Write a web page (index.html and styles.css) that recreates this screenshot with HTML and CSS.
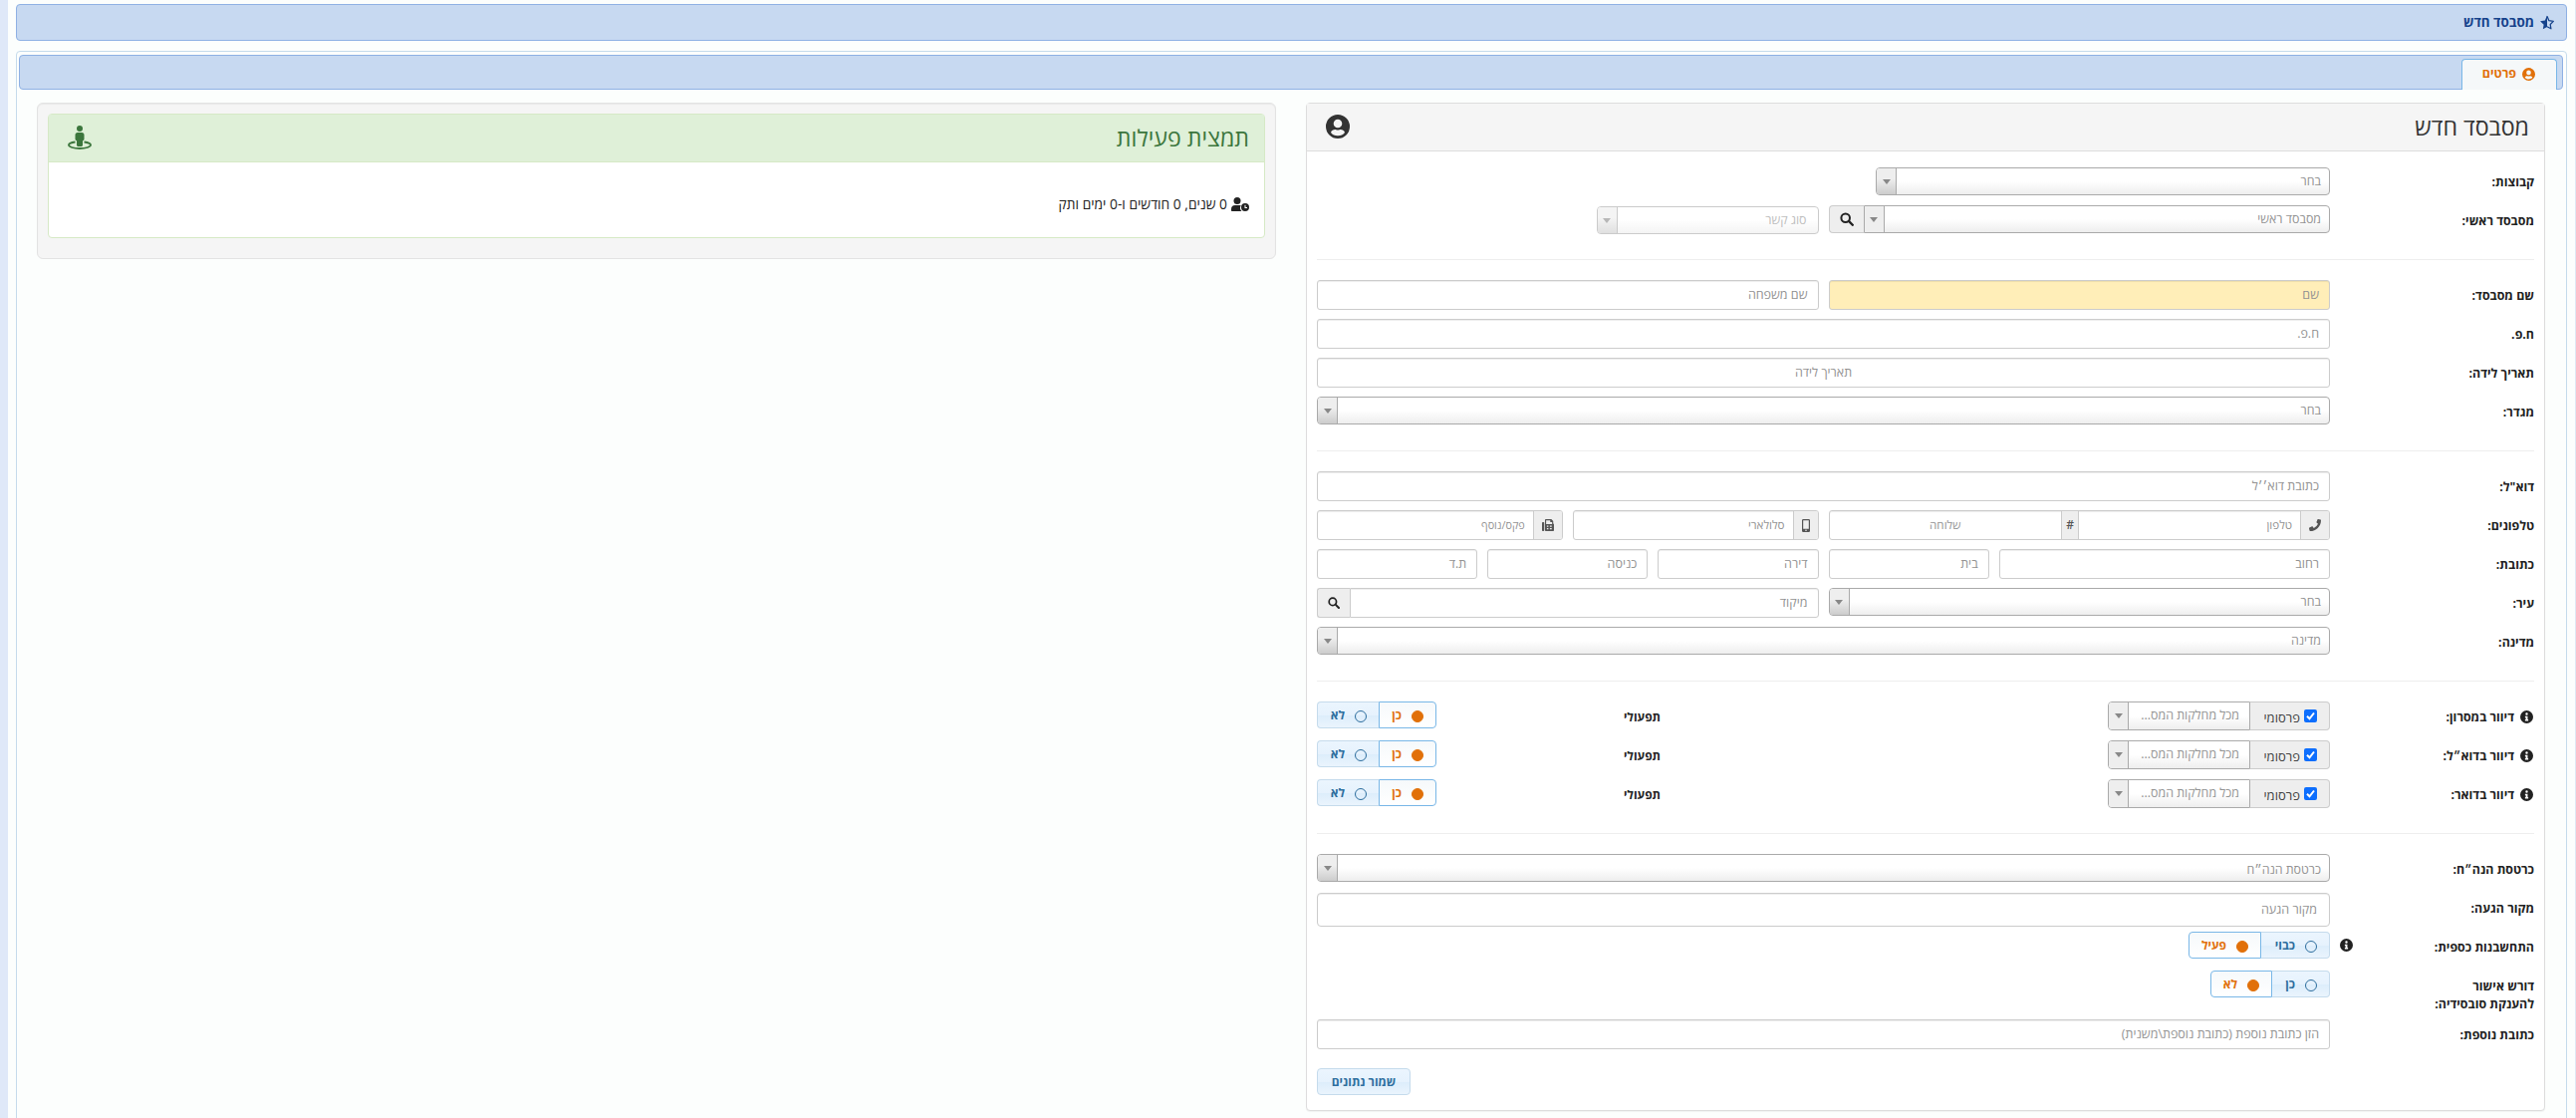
FILE: index.html
```html
<!DOCTYPE html>
<html lang="he" dir="rtl">
<head>
<meta charset="utf-8">
<title>מסבסד חדש</title>
<link rel="stylesheet" href="styles.css">
</head>
<body>
<svg width="0" height="0" class="defs" aria-hidden="true">
  <symbol id="i-user" viewBox="0 0 24 24"><path fill-rule="evenodd" d="M12 0a12 12 0 1 0 0 24a12 12 0 0 0 0-24zM12 4.700a4.300 4.300 0 1 1 0 8.600a4.300 4.300 0 0 1 0-8.600zM12 21.200c-3 0-5.400-1.200-7-3.300c.7-2 2.400-2.900 4.200-2.900c.8 0 1.200.5 2.800.5s2-.5 2.800-.5c1.800 0 3.500.9 4.200 2.900c-1.600 2.100-4 3.300-7 3.300z"/></symbol>
  <symbol id="i-search" viewBox="0 0 16 16"><circle cx="6.500" cy="6.500" r="4.900" fill="none" stroke="currentColor" stroke-width="2.300"/><path d="M10.200 10.200L14.600 14.600" stroke="currentColor" stroke-width="2.700" stroke-linecap="round"/></symbol>
  <symbol id="i-info" viewBox="0 0 16 16"><path fill-rule="evenodd" d="M8 0a8 8 0 1 0 0 16a8 8 0 0 0 0-16zM8 2.800a1.500 1.500 0 1 1 0 3a1.500 1.500 0 0 1 0-3zM6 7h3.200v4H10v1.800H6V11h.9V8.800H6z"/></symbol>
  <symbol id="i-star" viewBox="0 0 18 16"><path d="M9 .2v12.900L4.300 15.700l.9-5.300L1.200 6.500l5.400-.8z"/><path d="M9 1.100l2.100 4.900 5 .8-3.500 3.500.8 4.800L9 12.800" fill="none" stroke="currentColor" stroke-width="1.400" stroke-linejoin="round"/></symbol>
  <symbol id="i-phone" viewBox="0 0 16 16"><path d="M15.500.8L12.300 0c-.4-.1-.7.100-.9.400L9.900 3.900c-.1.300 0 .7.200.9l1.900 1.500a11.400 11.400 0 0 1-5.600 5.600L4.900 10c-.2-.3-.6-.4-.9-.2L.5 11.300c-.4.100-.6.500-.5.900l.7 3.200c.100.400.4.600.8.600C9.500 16 16 9.500 16 1.500c0-.3-.2-.6-.5-.7z"/></symbol>
  <symbol id="i-mobile" viewBox="0 0 10 16"><path fill-rule="evenodd" d="M1.500 0h7A1.500 1.500 0 0 1 10 1.500v13A1.500 1.500 0 0 1 8.500 16h-7A1.500 1.500 0 0 1 0 14.500v-13A1.500 1.500 0 0 1 1.500 0zM1.500 1.500V12h7V1.500zM5 13a1 1 0 1 0 0 2a1 1 0 0 0 0-2z"/></symbol>
  <symbol id="i-fax" viewBox="0 0 16 16"><path fill-rule="evenodd" d="M1 4h1c.6 0 1 .4 1 1v10c0 .6-.4 1-1 1H1c-.6 0-1-.4-1-1V5c0-.6.400-1 1-1zM5 0h7.500L15 2.500V6c.6.200 1 .7 1 1.200V15c0 .6-.4 1-1 1H5c-.6 0-1-.4-1-1V1c0-.6.400-1 1-1zM5.500 1.500V6.500h8V4h-2.500V1.500zM6.500 8.500v1.800h2V8.500zM10.500 8.500v1.800h2.500V8.500zM6.500 12v1.800h2V12zM10.500 12v1.800h2.500V12z"/></symbol>
  <symbol id="i-street" viewBox="0 0 24 24"><circle cx="12" cy="3" r="3"/><path d="M10 7h4a2.500 2.500 0 0 1 2.500 2.500v4c0 .9-.5 1.500-1.500 1.800V19.500c0 .9-.6 1.500-1.500 1.500h-3c-.9 0-1.500-.6-1.500-1.500V15.300c-1-.3-1.500-.9-1.500-1.800v-4A2.500 2.500 0 0 1 10 7z"/><path d="M7.500 16.500C3.500 17 1 18.200 1 19.600C1 21.500 6 23 12 23s11-1.500 11-3.400c0-1.400-2.500-2.600-6.500-3.100" fill="none" stroke="currentColor" stroke-width="1.800"/></symbol>
  <symbol id="i-clock" viewBox="0 0 18 14"><circle cx="6" cy="3.500" r="3.500"/><path d="M4 8h4.500c.500 0 .9.100 1.200.2A4.800 4.800 0 0 0 10.500 14H1c-.6 0-1-.4-1-1v-1a4 4 0 0 1 4-4z"/><path fill-rule="evenodd" d="M14 6a4 4 0 1 0 0 8a4 4 0 0 0 0-8zM13.500 7.800h1v2.100h1.500v1h-2.500z"/></symbol>
</svg>

<div class="page">
  <header class="titlebar"><svg class="ic star"><use href="#i-star"/></svg><span>מסבסד חדש</span></header>

  <main class="tabs">
    <nav class="tabbar"><div class="tab"><svg class="ic tabicon"><use href="#i-user"/></svg><span>פרטים</span></div></nav>
    <div class="columns">
      <section class="panel">
        <div class="phead"><h1>מסבסד חדש</h1><svg class="ic big"><use href="#i-user"/></svg></div>
        <form class="form">
          <div class="group">
            <div class="row"><label>קבוצות:</label><div class="ctl drop"><div class="select narrow"><span>בחר</span><i></i></div></div></div>
            <div class="row"><label>מסבסד ראשי:</label><div class="ctl halves">
              <div class="joined"><div class="select flat"><span>מסבסד ראשי</span><i></i></div><div class="btn"><svg class="ic find"><use href="#i-search"/></svg></div></div>
              <div class="select disabled"><span>סוג קשר</span><i></i></div></div></div>
          </div>
          <hr>
          <div class="group">
            <div class="row"><label>שם מסבסד:</label><div class="ctl halves"><div class="input required">שם</div><div class="input">שם משפחה</div></div></div>
            <div class="row"><label>ח.פ.</label><div class="ctl"><div class="input">ח.פ.</div></div></div>
            <div class="row"><label>תאריך לידה:</label><div class="ctl"><div class="input center">תאריך לידה</div></div></div>
            <div class="row"><label>מגדר:</label><div class="ctl"><div class="select"><span>בחר</span><i></i></div></div></div>
          </div>
          <hr>
          <div class="group">
            <div class="row"><label>דוא"ל:</label><div class="ctl"><div class="input">כתובת דוא׳׳ל</div></div></div>
            <div class="row"><label>טלפונים:</label><div class="ctl quarters">
              <div class="addgroup wide"><b class="a-lg"><svg class="ic"><use href="#i-phone"/></svg></b><span class="tel">טלפון</span><b class="a-xs">#</b><span class="ext">שלוחה</span></div>
              <div class="addgroup"><b class="a-md"><svg class="ic mob"><use href="#i-mobile"/></svg></b><span>סלולארי</span></div>
              <div class="addgroup"><b class="a-lg"><svg class="ic"><use href="#i-fax"/></svg></b><span class="fax">פקס/נוסף</span></div></div></div>
            <div class="row"><label>כתובת:</label><div class="ctl sixths"><div class="input wide">רחוב</div><div class="input">בית</div><div class="input">דירה</div><div class="input">כניסה</div><div class="input">ת.ד</div></div></div>
            <div class="row"><label>עיר:</label><div class="ctl halves"><div class="select"><span>בחר</span><i></i></div><div class="joined zip"><div class="input">מיקוד</div><div class="btn"><svg class="ic find"><use href="#i-search"/></svg></div></div></div></div>
            <div class="row"><label>מדינה:</label><div class="ctl"><div class="select"><span>מדינה</span><i></i></div></div></div>
          </div>
          <hr>
          <div class="group">
            <div class="row"><label><svg class="ic info"><use href="#i-info"/></svg>דיוור במסרון:</label><div class="ctl mail">
              <div class="joined pub"><div class="check"><em><svg viewBox="0 0 13 13"><path d="M3 6.800l2.500 2.500L10 3.500"/></svg></em>פרסומי</div><div class="select flat"><span>מכל מחלקות המס...</span><i></i></div></div>
              <strong>תפעולי</strong><div class="toggle"><div class="on w58">כן</div><div class="w62">לא</div></div></div></div>
            <div class="row"><label><svg class="ic info"><use href="#i-info"/></svg>דיוור בדוא״ל:</label><div class="ctl mail">
              <div class="joined pub"><div class="check"><em><svg viewBox="0 0 13 13"><path d="M3 6.800l2.500 2.500L10 3.500"/></svg></em>פרסומי</div><div class="select flat"><span>מכל מחלקות המס...</span><i></i></div></div>
              <strong>תפעולי</strong><div class="toggle"><div class="on w58">כן</div><div class="w62">לא</div></div></div></div>
            <div class="row"><label><svg class="ic info"><use href="#i-info"/></svg>דיוור בדואר:</label><div class="ctl mail">
              <div class="joined pub"><div class="check"><em><svg viewBox="0 0 13 13"><path d="M3 6.800l2.500 2.500L10 3.500"/></svg></em>פרסומי</div><div class="select flat"><span>מכל מחלקות המס...</span><i></i></div></div>
              <strong>תפעולי</strong><div class="toggle"><div class="on w58">כן</div><div class="w62">לא</div></div></div></div>
          </div>
          <hr>
          <div class="group">
            <div class="row"><label>כרטסת הנה״ח:</label><div class="ctl"><div class="select low"><span>כרטסת הנה״ח</span><i></i></div></div></div>
            <div class="row"><label>מקור הגעה:</label><div class="ctl"><div class="input tall">מקור הגעה</div></div></div>
            <div class="row"><label class="spread">התחשבנות כספית:<svg class="ic info"><use href="#i-info"/></svg></label><div class="ctl"><div class="toggle"><div class="w69">כבוי</div><div class="on w73">פעיל</div></div></div></div>
            <div class="row double"><label>דורש אישור<br>להענקת סובסידיה:</label><div class="ctl"><div class="toggle"><div class="w58">כן</div><div class="on w62">לא</div></div></div></div>
            <div class="row"><label>כתובת נוספת:</label><div class="ctl"><div class="input">הזן כתובת נוספת (כתובת נוספת\משנית)</div></div></div>
          </div>
          <div class="actions"><div class="save">שמור נתונים</div></div>
        </form>
      </section>

      <aside class="well">
        <div class="summary">
          <div class="shead"><h1>תמצית פעילות</h1><svg class="ic big"><use href="#i-street"/></svg></div>
          <div class="sbody"><svg class="ic clock"><use href="#i-clock"/></svg><span>0 שנים, 0 חודשים ו-0 ימים ותק</span></div>
        </div>
      </aside>
    </div>
  </main>
</div>
</body>
</html>
```
FILE: styles.css
```css
* { box-sizing: border-box; }
html, body { margin: 0; height: 1122px; overflow: hidden; }
body {
  background: #fcfefd;
  border-left: 8px solid #dfe8f8;
  border-right: 1px solid #dfe8f4;
  font-family: "Open Sans", "Noto Sans", sans-serif;
  font-size: 12px;
  line-height: 18px;
  color: #222;
}
.defs { position: absolute; }
.ic { display: block; flex: none; width: 13px; height: 13px; fill: currentColor; }
.page { height: 1122px; padding: 4px 8px 0 8px; display: flex; flex-direction: column; gap: 10px; }

.titlebar {
  height: 37px; flex: none; display: flex; align-items: center; gap: 5px; padding: 0 11px 1px 0;
  background: #c7d9f1; border: 1px solid #8fb1e4; border-radius: 4px;
  color: #15428b; font-size: 13.4px; font-weight: 700;
}
.star { width: 16px; height: 15px; }

.tabs { flex: none; height: 1090px; border: 1px solid #c5dbec; border-radius: 4px; padding: 3px 3px 0 2px; }
.tabbar {
  height: 35px; background: #c7d9f1; border: 1px solid #8fb1e4; border-radius: 4px;
  display: flex; align-items: flex-end; padding-right: 5px;
}
.tab {
  height: 31px; width: 96px; margin-bottom: -1px; background: #f5f8f9; border: 1px solid #79b7e7;
  border-bottom: 0; border-radius: 4px 4px 0 0; display: flex; align-items: center; gap: 6px;
  padding: 0 21px 2px 0; color: #e17009; font-weight: 700; font-size: 12.5px;
}
.columns { display: grid; grid-template-columns: 1244px 1244px; gap: 30px; justify-content: start; padding: 13px 18px 0 0; align-items: start; }

.panel { height: 1012px; background: #fff; border: 1px solid #ddd; border-radius: 4px; box-shadow: 0 1px 1px rgba(0,0,0,.05); }
h1 { margin: 0; font-size: 23.2px; font-weight: 500; line-height: 26px; }
.phead {
  height: 48px; display: flex; align-items: center; justify-content: space-between;
  background: #f5f5f5; border-bottom: 1px solid #ddd; padding: 0 15px 2px 19px; color: #333;
}
.big { width: 24px; height: 24px; }

.form { padding: 15px 10px 0; display: flex; flex-direction: column; }
.form hr { width: 100%; height: 1px; border: 0; background: #eee; margin: 15px 0 20px; }
.row { display: grid; grid-template-columns: 195px 1017px; gap: 10px; height: 39px; align-items: start; }
.row label { font-weight: 700; font-size: 12.4px; padding-top: 7px; display: flex; line-height: 18px; gap: 6px; }
.row .info { margin: 2px 1px 0 0; }
.row label.spread { justify-content: space-between; }
.row label.spread .info { margin: 0; }
.ctl { display: flex; align-items: flex-start; }
.drop { padding-top: 1px; }
.halves { display: grid; grid-template-columns: 1fr 1fr; gap: 10px; }
.quarters { display: grid; grid-template-columns: repeat(4, 1fr); gap: 10px; }
.sixths { display: grid; grid-template-columns: repeat(6, 1fr); gap: 10px; }
.wide { grid-column: span 2; }

.input {
  flex: 1; height: 30px; border: 1px solid #ccc; border-radius: 3px; background: #fff; color: #939393; font-size: 12.500px; font-weight: 500;
  box-shadow: inset 0 1px 1px rgba(0,0,0,.075); padding: 5px 10px; line-height: 18px;
}
.input.required { background: #ffeeb8; }
.input.center { text-align: center; }
.input.tall { height: 34px; padding: 7px 12px; border-radius: 4px; }

.select {
  flex: 1; height: 28px; display: flex; border: 1px solid #aaa; border-radius: 4px; overflow: hidden;
  background: linear-gradient(#fff 50%, #eee); color: #939393; font-size: 12.400px; font-weight: 500;
}
.select span { flex: 1; padding: 4px 8px 0; line-height: 18px; white-space: nowrap; }
.select i {
  width: 20px; border-right: 1px solid #aaa; display: flex; align-items: center; justify-content: center;
  background: linear-gradient(#eee 40%, #ccc);
}
.select i::before { content: ""; border: 4px solid transparent; border-top: 5px solid #888; border-bottom: 0; }
.select.narrow { flex: none; width: 456px; }
.select.low span { padding-top: 6px; }
.select.disabled { opacity: .6; width: 223px; margin-top: 1px; }
.select.disabled span { padding-right: 11px; }

.joined { display: flex; flex: 1; }
.joined .flat { border-radius: 0 4px 4px 0; }
.joined .flat i { background: #eee; width: 20px; }
.joined .btn {
  width: 35px; height: 28px; display: flex; align-items: center; justify-content: center;
  background: #eee; border: 1px solid #ccc; border-right: 0; border-radius: 4px 0 0 4px;
}
.find { width: 14px; height: 14px; }
.zip .input { border-radius: 0 3px 3px 0; }
.zip .btn { width: 33px; height: 30px; border-radius: 3px 0 0 3px; }
.zip .find { width: 12px; height: 12px; }

.addgroup { height: 30px; display: flex; border: 1px solid #ccc; border-radius: 3px; overflow: hidden; box-shadow: inset 0 1px 1px rgba(0,0,0,.075); color: #939393; font-size: 11.600px; font-weight: 500; }
.addgroup b { display: flex; align-items: center; justify-content: center; background: #eee; color: #555; border-left: 1px solid #ccc; font-weight: 600; font-size: 12px; }
.addgroup span { flex: 1; padding: 5px 8px; }
.addgroup .tel { flex: none; width: 222px; }
.addgroup .ext { text-align: center; }
.addgroup .fax { font-size: 10.800px; }
.a-lg { width: 29px; } .a-md { width: 25px; } .a-xs { width: 18px; border-right: 1px solid #ccc; }
.addgroup .ic { width: 12px; height: 12px; }
.addgroup .mob { width: 8px; height: 13px; }

.mail .pub { flex: none; width: 223px; }
.check {
  width: 80px; height: 29px; display: flex; align-items: center; gap: 4px; padding: 2px 12px 0 0;
  background: #eee; border: 1px solid #ccc; border-left: 0; border-radius: 0 4px 4px 0; color: #444; font-size: 13px;
}
.check em { width: 13px; height: 13px; border-radius: 2px; background: #0d6efd; margin-top: -3px; }
.check svg { display: block; width: 13px; height: 13px; fill: none; stroke: #fff; stroke-width: 2; }
.mail .pub .flat { height: 29px; border-radius: 4px 0 0 4px; }
.mail .pub .flat span { padding: 4px 10px 0 0; }
.mail .pub .flat i { flex: none; }
.mail strong { margin-right: 449px; padding-top: 7px; }
.mail .toggle { margin-right: auto; }

.toggle { display: flex; height: 27px; }
.toggle div, .save {
  display: flex; align-items: center; height: 27px; font-weight: 700; color: #2e6e9e; border: 1px solid #c5dbec;
  background: linear-gradient(#ebf5fe 0, #e6f2fd 50%, #dcedfb 51%, #eaf4fd 100%);
}
.toggle div { gap: 10px; padding: 0 12px 0 0; }
.toggle div::before { content: ""; width: 10px; height: 10px; border: 1px solid #2e6e9e; border-radius: 50%; margin-top: 2px; }
.toggle div:first-child { border-radius: 0 4px 4px 0; border-left: 0; }
.toggle div:last-child { border-radius: 4px 0 0 4px; }
.toggle .on.on { background: linear-gradient(#f6f9fb, #fff); border: 1px solid #79b7e7; color: #e17009; }
.toggle .on.on + div { border-right: 0; }
.toggle .on::before { background: #e17009; border-color: #e17009; }
.w58 { width: 58px; } .w62 { width: 62px; } .w69 { width: 69px; } .w73 { width: 73px; }

.row.double { height: 49px; }
.actions { display: flex; justify-content: flex-end; padding-top: 10px; }
.save { width: 94px; justify-content: center; border-radius: 4px; }

.well { height: 157px; padding: 10px; background: #f5f5f5; border: 1px solid #e3e3e3; border-radius: 6px; box-shadow: inset 0 1px 1px rgba(0,0,0,.05); }
.summary { height: 125px; background: #fff; border: 1px solid #d6e9c6; border-radius: 4px; }
.shead {
  height: 48px; display: flex; align-items: center; justify-content: space-between; padding: 0 15px 2px 19px;
  background: #dff0d8; border-bottom: 1px solid #d6e9c6; color: #3c763d;
}
.sbody { display: flex; align-items: center; gap: 4px; padding: 33px 15px 0 0; font-size: 13.800px; }
.clock { width: 18px; height: 14px; }
```
